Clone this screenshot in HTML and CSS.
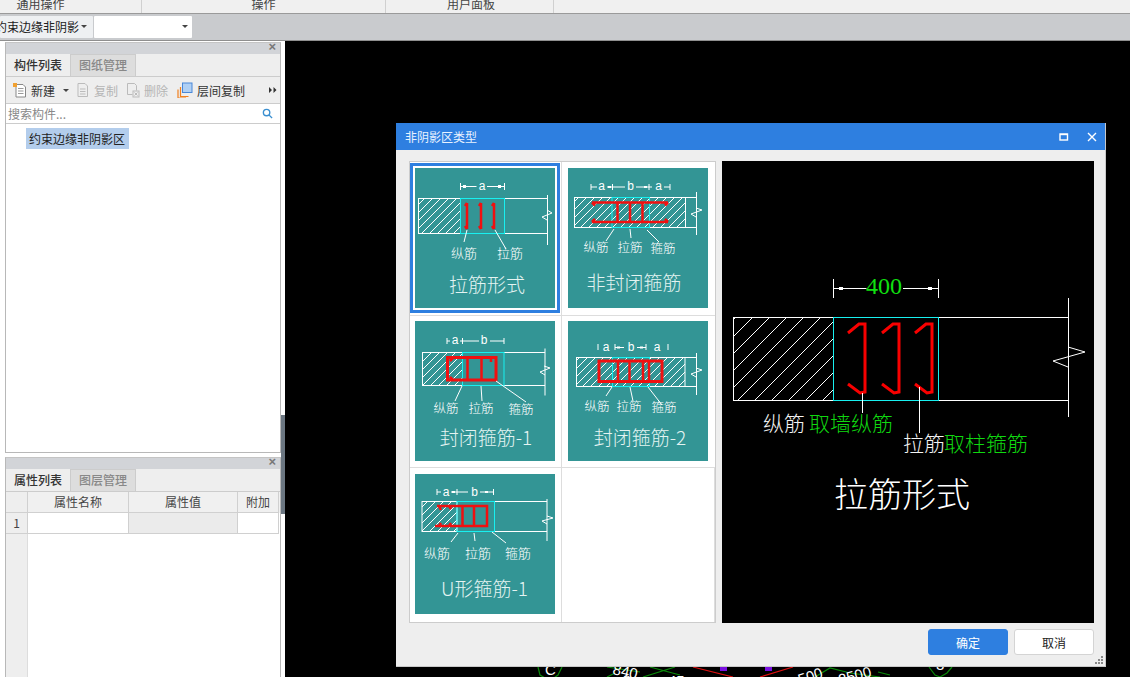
FILE: index.html
```html
<!DOCTYPE html>
<html lang="zh-CN">
<head>
<meta charset="utf-8">
<title>非阴影区类型</title>
<link rel="stylesheet" href="styles.css">
</head>
<body>
<div class="app">
  <div class="ribbon">
    <div class="ribbon-group g1">通用操作</div>
    <div class="ribbon-group g2">操作</div>
    <div class="ribbon-group g3">用户面板</div>
  </div>
  <div class="selectbar">
    <div class="combo combo-a"><span class="combo-text">约束边缘非阴影</span><span class="caret"></span></div>
    <div class="combo combo-b"><span class="caret"></span></div>
  </div>
  <div class="workspace">
    <aside class="sidebar">
      <section class="panel panel-top">
        <div class="panel-head"><span class="panel-x">×</span></div>
        <div class="tabs">
          <div class="tab active">构件列表</div>
          <div class="tab">图纸管理</div>
        </div>
        <div class="tools">
          <span class="tool tool-new">
            <svg class="ico" viewBox="0 0 16 16"><path class="doc" d="M4 2.500h7l2.500 2.500V15H4z"/><path class="docl" d="M6 6.500h5.500M6 9h5.500M6 11.500h5.500"/><rect class="star" x="1" y="1" width="4" height="4"/></svg>
            新建<span class="caret small"></span>
          </span>
          <span class="tool off">
            <svg class="ico" viewBox="0 0 16 16"><path class="docg" d="M3 1.500h7l2.500 2.500v10.500H3z"/><path class="docg" d="M5 7h5.500M5 9.500h5.500M5 12h5.500"/></svg>
            复制
          </span>
          <span class="tool off">
            <svg class="ico" viewBox="0 0 16 16"><path class="docg" d="M2.500 1.500h7l2 2v5M2.500 1.500v11h5"/><rect class="delbox" x="8" y="9" width="6" height="6"/><path class="docg" d="M9.500 10.500l3 3M12.500 10.500l-3 3"/></svg>
            删除
          </span>
          <span class="tool tool-floor">
            <svg class="ico ico-floor" viewBox="0 0 16 16"><path class="orange" d="M3.500 5v9.500h8M1 7.500V16h8"/><rect class="bluebox" x="5.500" y="1" width="9.500" height="9.500"/></svg>
            层间复制
          </span>
          <svg class="more" viewBox="0 0 8 6"><path d="M0 0l3 3-3 3zM4.500 0l3 3-3 3z"/></svg>
        </div>
        <div class="search">
          <span class="search-text">搜索构件...</span>
          <svg class="search-ico" viewBox="0 0 12 12"><circle cx="5" cy="5" r="3.500"/><path d="M7.500 7.500l3.500 3.500"/></svg>
        </div>
        <div class="tree"><span class="tree-item">约束边缘非阴影区</span></div>
      </section>
      <section class="panel panel-bottom">
        <div class="panel-head"><span class="panel-x">×</span></div>
        <div class="tabs">
          <div class="tab active">属性列表</div>
          <div class="tab">图层管理</div>
        </div>
        <div class="grid-wrap">
          <div class="prop-row prop-head">
            <div class="pc pc-n"></div><div class="pc pc-a">属性名称</div><div class="pc pc-b">属性值</div><div class="pc pc-c">附加</div>
          </div>
          <div class="prop-row prop-body">
            <div class="pc pc-n">1</div><div class="pc pc-a"></div><div class="pc pc-b grey"></div><div class="pc pc-c"></div>
          </div>
          <div class="prop-rest"></div>
        </div>
      </section>
      <div class="grip"></div>
    </aside>
    <main class="canvas">
      <svg class="cad" viewBox="0 0 845 636">
        <g class="cad-green">
          <path d="M253 626l2 8 5 3M277 626l-4 8-4 3"/>
          <path d="M365 626l30 8M390 626l-32 10M322 626l33 5M322 636l8-4"/>
          <path d="M530 636l15-9 20 5 30 4M593 631l12 3"/>
          <path d="M644 626l6 8 5 2 7-4 5-6"/>
        </g>
        <path class="cad-red" d="M408 626l40 10M508 626l-33 10"/>
        <rect class="cad-purple" x="435" y="626" width="7" height="4"/>
        <rect class="cad-purple" x="480" y="626" width="7" height="4"/>
        <text class="cad-text" x="260" y="634">C</text>
        <text class="cad-text" x="327" y="633" transform="rotate(12 327 633)">840</text>
        <text class="cad-text" x="336" y="644" transform="rotate(12 336 644)">860</text>
        <text class="cad-text" x="383" y="645">45</text>
        <text class="cad-text" x="515" y="644" transform="rotate(-18 515 644)">500</text>
        <text class="cad-text" x="555" y="644" transform="rotate(-15 555 644)">2500</text>
        <text class="cad-text" x="651" y="629">3</text>
      </svg>
    </main>
  </div>

  <div class="dialog">
    <header class="dialog-bar">
      <span class="dialog-title">非阴影区类型</span>
      <svg class="win-ico" viewBox="0 0 10 10"><rect x="1" y="2" width="7.500" height="6"/><path d="M1 2.500h7.500"/></svg>
      <svg class="win-ico win-close" viewBox="0 0 10 10"><path d="M1 1l8 8M9 1l-8 8"/></svg>
    </header>
    <div class="dialog-body">
      <div class="thumbs">
        <svg class="defs" width="0" height="0">
          <defs>
            <pattern id="hatch" width="8" height="8" patternUnits="userSpaceOnUse"><path class="hl" d="M-1 9L9 -1"/></pattern>
            <pattern id="hatchL" width="17" height="17" patternUnits="userSpaceOnUse"><path class="hl" d="M-1 18L18 -1"/></pattern>
          </defs>
        </svg>
        <div class="cell c1">
          <svg class="thumb selected" viewBox="0 0 140 140">
            <rect class="hz w" x="3.500" y="30.500" width="42" height="35"/>
            <path class="w" d="M89 30.500h43M89 65.500h43M132.500 27v50M132 42l5 3-10 4 5 3"/>
            <rect class="cy" x="45.500" y="30.500" width="44" height="35"/>
            <path class="w" d="M45.500 15v7M89.500 15v7M45.500 18.500h16M72 18.500h17"/>
            <rect class="wf" x="48" y="17" width="3" height="3"/><rect class="wf" x="83" y="17" width="3" height="3"/>
            <text class="dim" x="67" y="22">a</text>
            <path class="rd" d="M52 35v26M66 35v26M79 35v26M52 35l-2 3M66 35l-2 3M79 35l-2 3M52 61l-2-3M66 61l-2-3M79 61l-2-3"/>
            <path class="w" d="M52 62l-3 12M80 62l11 19"/>
            <text class="lb" x="49" y="90">纵筋</text><text class="lb" x="95" y="90">拉筋</text>
            <text class="tt" x="72" y="124">拉筋形式</text>
          </svg>
        </div>
        <div class="cell c2">
          <svg class="thumb" viewBox="0 0 140 140">
            <rect class="hz w" x="6.500" y="29.500" width="111" height="30"/>
            <path class="w" d="M118 29.500h10M118 59.500h10M128.500 24v43M128 40l6 2-11 4 5 3"/>
            <rect class="cy" x="44" y="29.500" width="37.500" height="30"/>
            <path class="w" d="M23 16v6M102 16v6M44.500 16v6M81 16v6M23 19h6M39 19h18M68 19h16M96 19h6"/>
            <rect class="wf" x="40" y="18" width="3" height="2"/><rect class="wf" x="76" y="18" width="3" height="2"/>
            <text class="dim" x="33.500" y="22">a</text><text class="dim" x="62.500" y="22">b</text><text class="dim" x="90.500" y="22">a</text>
            <path class="rd" d="M24 34.500h76M24 54h76M49.500 34.500V54M62 34.500V54M74.500 34.500V54M24 34.500l3 3M100 34.500l-3 3M24 54l3-3M100 54l-3-3"/>
            <path class="w" d="M46 61l-8 12M62 61l1 9M79 62l12 12"/>
            <text class="lb sm" x="28" y="84">纵筋</text><text class="lb sm" x="62" y="84">拉筋</text><text class="lb sm" x="95" y="85">箍筋</text>
            <text class="tt" x="66" y="122">非封闭箍筋</text>
          </svg>
        </div>
        <div class="cell c3">
          <svg class="thumb" viewBox="0 0 140 140">
            <rect class="hz w" x="7.500" y="31.500" width="40" height="33"/>
            <path class="w" d="M89 31.500h41M89 64.500h41M130 27.500v47M129 45l6 2-10 4 5 3"/>
            <rect class="cy" x="47.500" y="31.500" width="41.500" height="33"/>
            <path class="w" d="M32 17v6M47.500 17v6M89 17v6M32 20h3M45 20h3M48 20h16M75 20h14"/>
            <text class="dim" x="40" y="23">a</text><text class="dim" x="69" y="23">b</text>
            <rect class="rbox" x="32.500" y="36.500" width="48.500" height="22.500"/>
            <path class="rd" d="M52.500 36.500V59M66.500 36.500V59M76 37v4M38 37l-3 3M38 59l-3-3"/>
            <path class="w" d="M47 65l-7 15M66 65l1 15M81 60l30 21"/>
            <text class="lb sm" x="31" y="92">纵筋</text><text class="lb sm" x="66" y="92">拉筋</text><text class="lb sm" x="106" y="93">箍筋</text>
            <text class="tt" x="71" y="124">封闭箍筋-1</text>
          </svg>
        </div>
        <div class="cell c4">
          <svg class="thumb" viewBox="0 0 140 140">
            <rect class="hz w" x="8.500" y="36.500" width="108.500" height="29"/>
            <path class="w" d="M117 36.500h11.500M117 65.500h11.500M128.500 32v42M128 47l6 2-11 4 5 3"/>
            <rect class="cy" x="44.500" y="36.500" width="37" height="29"/>
            <path class="w" d="M30 23v6M47 23v6M78 23v6M100 23v6M47 26.500h9M69 26.500h9"/>
            <rect class="wf" x="49" y="25.500" width="3" height="2"/><rect class="wf" x="72" y="25.500" width="3" height="2"/>
            <text class="dim" x="38" y="30">a</text><text class="dim" x="63" y="30">b</text><text class="dim" x="89" y="30">a</text>
            <rect class="rbox" x="31" y="40" width="63" height="20.500"/>
            <path class="rd" d="M50 40v20.500M61.500 40v20.500M75 40v20.500M81 40v20.500"/>
            <path class="w" d="M44 66l-6 9M62 66l3 14M80 66l14 18"/>
            <text class="lb sm" x="29" y="90">纵筋</text><text class="lb sm" x="61" y="90">拉筋</text><text class="lb sm" x="96" y="91">箍筋</text>
            <text class="tt" x="72" y="124">封闭箍筋-2</text>
          </svg>
        </div>
        <div class="cell c5">
          <svg class="thumb" viewBox="0 0 140 140">
            <rect class="hz w" x="7" y="27.500" width="35" height="30"/>
            <path class="w" d="M79 27.500h53M79 57.500h53M132 25v42M132 42l6 2-11 3 5 3"/>
            <rect class="cy" x="42" y="27.500" width="37.500" height="30"/>
            <path class="w" d="M22 15v6M42 15v6M78.500 15v6M22 18h4M36 18h17M65 18h14"/>
            <rect class="wf" x="37" y="17" width="3" height="2"/><rect class="wf" x="70" y="17" width="3" height="2"/>
            <text class="dim" x="31" y="22">a</text><text class="dim" x="59.500" y="22">b</text>
            <path class="rd" d="M22 32h50v20H20M47.500 32v20M59 32v20M24 32l2 4M34 32l2 3M24 52l2-3M34 52l2-3"/>
            <path class="w" d="M43 59l-7 9M59 59l1 8M77 58l14 11"/>
            <text class="lb" x="22" y="84">纵筋</text><text class="lb" x="63" y="84">拉筋</text><text class="lb" x="103" y="84">箍筋</text>
            <text class="tt" x="69.500" y="122">U形箍筋-1</text>
          </svg>
        </div>
        <div class="cell c6"></div>
      </div>
      <div class="preview">
        <svg class="preview-svg" viewBox="0 0 372 462">
          <rect class="hzL w" x="11.500" y="156.500" width="100" height="83"/>
          <path class="w" d="M216 156.500h130M216 239.500h130M346.500 137v119"/>
          <path class="wt" d="M346 186l17 5-32 9 15 6"/>
          <rect class="cy" x="111.500" y="156.500" width="105" height="83"/>
          <path class="w" d="M111.500 118v19M216.500 118v19M111.500 127.500h33M181 127.500h35"/>
          <rect class="wf" x="117" y="126" width="4" height="3"/><rect class="wf" x="206" y="126" width="4" height="3"/>
          <text class="big-num" x="162" y="133">400</text>
          <path class="rdL" d="M126 172l11-9h6v68l-5 1-12-9M160 172l11-9h6v68l-5 1-12-9M193 172l11-9h6v68l-5 1-12-9"/>
          <path class="w" d="M140.500 232v20M197.500 226v46"/>
          <text class="lbL wfill" x="41" y="270">纵筋</text>
          <text class="lbL gfill" x="87" y="270">取墙纵筋</text>
          <text class="lbL wfill" x="181" y="290">拉筋</text>
          <text class="lbL gfill" x="222" y="290">取柱箍筋</text>
          <text class="ttL" x="112" y="346">拉筋形式</text>
        </svg>
      </div>
    </div>
    <footer class="dialog-foot">
      <button class="btn primary">确定</button>
      <button class="btn">取消</button>
      <svg class="resize" viewBox="0 0 8 8"><path d="M6 0h2v2H6zM3 3h2v2H3zM6 3h2v2H6zM0 6h2v2H0zM3 6h2v2H3zM6 6h2v2H6z"/></svg>
    </footer>
  </div>
</div>
</body>
</html>
```
FILE: styles.css
```css
* { box-sizing: border-box; }
html, body { margin: 0; padding: 0; }
body { font-family: "Noto Sans CJK SC", "Liberation Sans", sans-serif; font-size: 12px; color: #333; background: #000; }
.app { position: relative; width: 1130px; height: 677px; overflow: hidden; display: flex; flex-direction: column; }

/* top bars */
.ribbon { height: 14px; flex: none; display: flex; background: #f0f0f0; border-bottom: 1px solid #9a9a9a; overflow: hidden; }
.ribbon-group { height: 13px; border-right: 1px solid #d0d0d0; text-align: center; line-height: 8px; color: #444; }
.ribbon-group.g1 { width: 142px; padding-right: 60px; }
.ribbon-group.g2 { width: 244px; }
.ribbon-group.g3 { width: 168px; padding-left: 3px; }
.selectbar { height: 27px; flex: none; display: flex; gap: 1px; align-items: center; background: #c9cbce; border-bottom: 1px solid #8f8f8f; padding-bottom: 1px; }
.combo { height: 22px; background: #fff; display: flex; align-items: center; border-radius: 1px; overflow: hidden; }
.combo-a { width: 93px; background: #eef0f2; }
.combo-b { width: 98px; justify-content: flex-end; padding-right: 4px; }
.combo-text { flex: none; margin-left: -5px; font-size: 12px; color: #222; white-space: nowrap; width: 86px; }
.caret { flex: none; display: inline-block; width: 0; height: 0; border-left: 3px solid transparent; border-right: 3px solid transparent; border-top: 3px solid #444; }
.caret.small { margin-left: 5px; vertical-align: middle; }

/* layout */
.workspace { flex: 1; display: flex; min-height: 0; }
.sidebar { position: relative; width: 285px; flex: none; background: #fff; padding: 1px 4px 0 5px; display: flex; flex-direction: column; gap: 4px; }
.canvas { flex: 1; background: #000; position: relative; }
.cad { display: block; width: 845px; height: 636px; }
.cad-green path { fill: none; stroke: #0a8a0a; stroke-width: 1.200; }
.cad-red { fill: none; stroke: #e01010; stroke-width: 1.200; }
.cad-purple { fill: #7a10e0; }
.cad-text { fill: #fff; font-family: "Liberation Sans", sans-serif; font-size: 15px; }
.grip { position: absolute; right: 0; top: 374px; width: 4px; height: 99px; background: #6b7681; }

/* panels */
.panel { border: 1px solid #b8b8b8; border-top-color: #c4c4c4; display: flex; flex-direction: column; background: #fff; }
.panel-top { height: 411px; flex: none; }
.panel-bottom { flex: 1; min-height: 0; border-bottom: 0; }
.panel-head { height: 11px; flex: none; background: #d2d4d8; position: relative; }
.panel-x { position: absolute; right: 4px; top: -3px; font: 13px/14px "Liberation Sans", sans-serif; color: #777; font-weight: 700; }
.tabs { height: 23px; flex: none; display: flex; background: #eee; border-bottom: 1px solid #ccc; }
.tab { width: 65px; text-align: center; line-height: 20px; color: #888; background: #ddd; border-right: 1px solid #ccc; border-top: 1px solid #ccc; font-weight: 500; }
.tab.active { width: 65px; background: #eee; color: #333; border-top: 0; line-height: 22px; }
.tools { height: 27px; flex: none; display: flex; align-items: center; background: #eee; border-bottom: 1px solid #ccc; padding-left: 6px; position: relative; }
.tool { display: inline-flex; align-items: center; gap: 3px; margin-right: 7px; color: #333; white-space: nowrap; }
.tool.off { color: #b5b5b5; }
.tool-new { margin-right: 6px; gap: 3px; }
.tool-floor { margin-left: 2px; gap: 4px; }
.ico { width: 16px; height: 16px; display: block; }
.doc { fill: #fff; stroke: #888; }
.docl { fill: none; stroke: #999; }
.star { fill: #f0a030; }
.docg { fill: none; stroke: #bbb; }
.delbox { fill: #eee; stroke: #bbb; }
.orange { fill: none; stroke: #f08020; stroke-width: 1.200; }
.bluebox { fill: #b0d0f4; stroke: #4a88d8; }
.more { position: absolute; right: 3px; top: 10px; width: 8px; height: 6px; fill: #333; }
.search { height: 20px; flex: none; display: flex; align-items: center; justify-content: space-between; padding: 0 7px 0 2px; border-bottom: 1px solid #ccc; }
.search-text { color: #888; }
.search-ico { width: 11px; height: 11px; fill: none; stroke: #3a8fd0; stroke-width: 1.500; }
.tree { flex: 1; padding: 4px 0 0 20px; }
.tree-item { display: inline-block; height: 21px; width: 103px; padding-left: 3px; line-height: 21px; background: #b3cdec; color: #222; white-space: nowrap; }

/* property grid */
.grid-wrap { flex: 1; display: flex; flex-direction: column; min-height: 0; }
.prop-row { display: flex; height: 21px; flex: none; }
.prop-head { background: #f0f0f0; }
.pc { border-right: 1px solid #d0d0d0; border-bottom: 1px solid #d0d0d0; text-align: center; line-height: 19px; color: #444; }
.pc-n { width: 22px; background: #eee; }
.pc-a { width: 101px; }
.pc-b { width: 109px; }
.pc-c { width: 41px; }
.pc.grey { background: #ebebeb; }
.prop-rest { flex: 1; width: 22px; background: #eee; border-right: 1px solid #ddd; }

/* dialog */
.dialog { position: absolute; left: 396px; top: 123px; width: 710px; height: 544px; background: #eee; display: flex; flex-direction: column; border-right: 1px solid #c8c8c8; border-bottom: 1px solid #c8c8c8; }
.dialog-bar { height: 27px; flex: none; background: #2e7fe0; color: #fff; display: flex; align-items: center; padding: 0 8px 0 9px; gap: 18px; }
.dialog-title { flex: 1; color: #e8f2ff; font-size: 12px; }
.win-ico { width: 10px; height: 10px; fill: none; stroke: #fff; stroke-width: 1.400; }
.dialog-body { flex: none; display: flex; gap: 6px; padding: 11px 11px 0 13px; }
.thumbs { width: 307px; height: 462px; background: #fff; border: 1px solid #ccc; display: grid; grid-template-columns: 152px 153px; grid-template-rows: 154px 152px 154px; }
.defs { position: absolute; }
.cell { border-right: 1px solid #ddd; border-bottom: 1px solid #ddd; padding: 6px 0 0 5px; }
.c2, .c4 { padding-left: 6px; border-right: 0; }
.c3, .c4 { padding-top: 5px; }
.c5, .c6 { border-bottom: 0; }
.thumb { display: block; width: 140px; height: 140px; background: #339595; }
.thumb.selected { outline: 3px solid #2e7fe0; outline-offset: 2px; }
.hl { fill: none; stroke: #fff; stroke-width: 1; }
.w { fill: none; stroke: #fff; stroke-width: 1; }
.wt { fill: none; stroke: #fff; stroke-width: 1; }
.hz { fill: url(#hatch); }
.hzL { fill: url(#hatchL); }
.wf { fill: #fff; }
.cy { fill: none; stroke: #18f0f0; stroke-width: 1; }
.rd { fill: none; stroke: #f01010; stroke-width: 2.500; }
.rbox { fill: none; stroke: #f01010; stroke-width: 3; }
.rdL { fill: none; stroke: #f80000; stroke-width: 3; }
.dim { fill: #fff; font-size: 12px; text-anchor: middle; font-family: "Liberation Sans", sans-serif; }
.lb { fill: #fff; font-size: 13px; text-anchor: middle; font-weight: 300; }
.lb.sm { font-size: 12.500px; }
.tt { fill: #e4f4f2; font-size: 19px; text-anchor: middle; font-weight: 300; }
.preview { width: 372px; height: 462px; background: #000; }
.preview-svg { display: block; width: 372px; height: 462px; }
.big-num { fill: #10e010; font-family: "Liberation Serif", serif; font-size: 24px; text-anchor: middle; }
.lbL { font-size: 21px; font-weight: 300; }
.wfill { fill: #f4f4f4; }
.gfill { fill: #10d810; }
.ttL { fill: #fff; font-size: 34px; font-weight: 300; }

.dialog-foot { flex: 1; position: relative; display: flex; justify-content: flex-end; align-items: flex-start; gap: 6px; padding: 6px 11px 0 0; }
.btn { width: 80px; height: 26px; border-radius: 3px; border: 1px solid #d4d4d4; background: #fff; font: 12px "Noto Sans CJK SC", sans-serif; color: #222; padding: 0; }
.btn.primary { background: #2e7fe0; border-color: #2e7fe0; color: #fff; }
.resize { position: absolute; right: 2px; bottom: 2px; width: 8px; height: 8px; fill: #888; }
```
